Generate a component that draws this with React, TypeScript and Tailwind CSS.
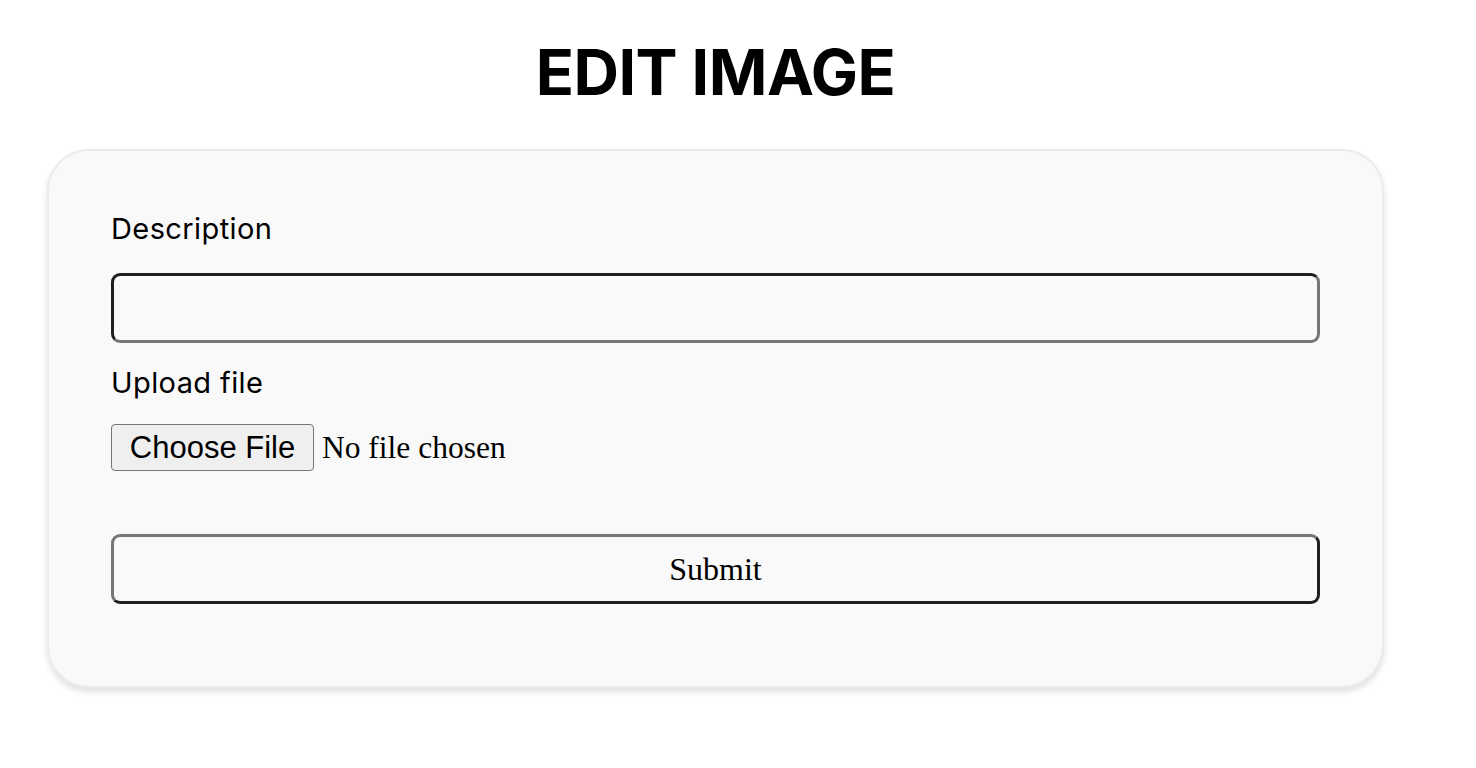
const EditImage = () => {
  return (
    <div className="min-h-screen bg-white">
      <div className="ml-[47px] w-[1337px] pt-[36px]">
        <h1 className="text-center text-[63px] font-bold leading-[72px] tracking-[-0.5px] text-black [font-family:Inter,'Noto_Sans',sans-serif]">
          EDIT IMAGE
        </h1>

        <form className="mt-[41px] rounded-[42px] border-2 border-[#ebebeb] bg-[#f9f9f9] px-[62px] pt-[58px] pb-[82px] shadow-[0_4px_6px_rgba(0,0,0,0.12)]">
          <label className="block text-[29px] leading-[40px] tracking-[0.4px] text-black [font-family:Inter,'Noto_Sans',sans-serif]">
            Description
          </label>
          <input
            type="text"
            className="mt-[24px] block h-[70px] w-full rounded-[9px] border-[3px] border-t-[#1f1f1f] border-l-[#1f1f1f] border-r-[#767676] border-b-[#767676] bg-[#f9f9f9] px-3 outline-none"
          />

          <label className="mt-[20px] block text-[29px] leading-[40px] tracking-[0.4px] text-black [font-family:Inter,'Noto_Sans',sans-serif]">
            Upload file
          </label>
          <div className="mt-[21px] flex items-center gap-[8px]">
            <button
              type="button"
              className="h-[47px] w-[203px] rounded-[4px] border border-[#767676] bg-[#efefef] text-[31px] leading-none text-black [font-family:'Liberation_Sans',Arial,sans-serif]"
            >
              Choose File
            </button>
            <span className="text-[31.5px] leading-none text-black [font-family:'Liberation_Serif','Times_New_Roman',serif]">
              No file chosen
            </span>
          </div>

          <button
            type="submit"
            className="mt-[63px] block h-[70px] w-full rounded-[9px] border-[3px] border-t-[#767676] border-l-[#767676] border-r-[#1f1f1f] border-b-[#1f1f1f] bg-[#f9f9f9] text-[32px] text-black [font-family:'Liberation_Serif','Times_New_Roman',serif]"
          >
            Submit
          </button>
        </form>
      </div>
    </div>
  );
};

export default function App() {
  return <EditImage />;
}
